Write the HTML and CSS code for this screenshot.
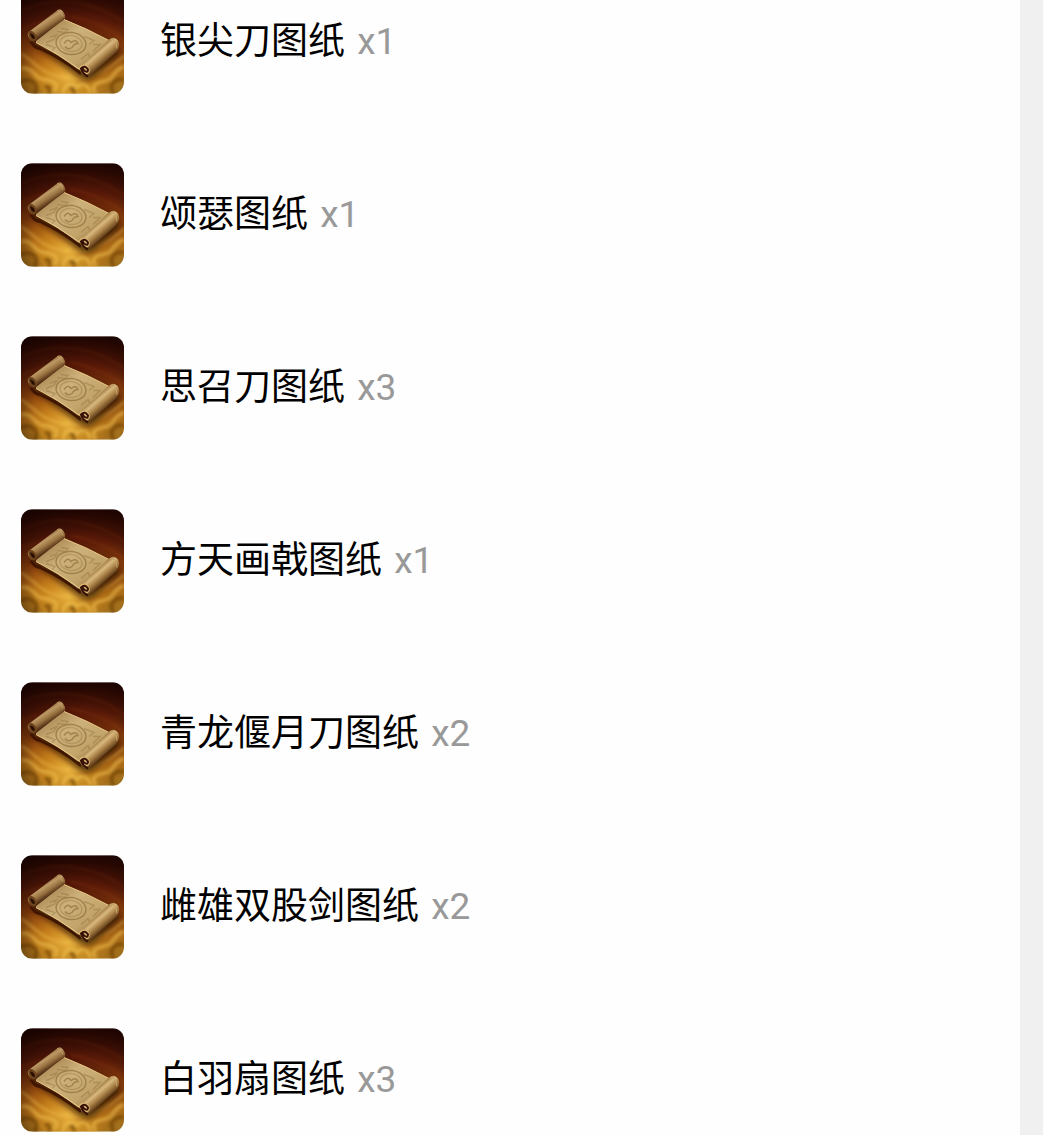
FILE: index.html
```html
<!DOCTYPE html>
<html lang="zh-CN">
<head>
  <meta charset="UTF-8" />
  <meta name="viewport" content="width=device-width, initial-scale=1.0"/>
  <title>图纸</title>
  <link rel="stylesheet" href="styles.css">
</head>
<body>
  <!-- Shared scroll icon -->
  <svg class="sprite" aria-hidden="true">
    <defs>
      <linearGradient id="bgBase" x1="0" y1="0" x2="0" y2="1">
        <stop offset="0" stop-color="#2c0702"/>
        <stop offset="0.3" stop-color="#5a1a08"/>
        <stop offset="0.55" stop-color="#843d0c"/>
        <stop offset="0.8" stop-color="#a96a16"/>
        <stop offset="1" stop-color="#a0741f"/>
      </linearGradient>
      <radialGradient id="bgGlow" cx="0.46" cy="0.83" r="0.5">
        <stop offset="0" stop-color="#ffc94a" stop-opacity="0.75"/>
        <stop offset="0.5" stop-color="#e79a20" stop-opacity="0.45"/>
        <stop offset="1" stop-color="#a44a08" stop-opacity="0"/>
      </radialGradient>
      <radialGradient id="bgShade" cx="0.58" cy="0.7" r="0.9">
        <stop offset="0.5" stop-color="#100200" stop-opacity="0"/>
        <stop offset="1" stop-color="#100200" stop-opacity="0.85"/>
      </radialGradient>
      <linearGradient id="paper" x1="0" y1="0" x2="1" y2="1">
        <stop offset="0" stop-color="#9a743f"/>
        <stop offset="0.4" stop-color="#cdb17b"/>
        <stop offset="0.7" stop-color="#c2a469"/>
        <stop offset="1" stop-color="#7e5527"/>
      </linearGradient>
      <linearGradient id="rollLeft" gradientUnits="userSpaceOnUse" x1="21" y1="27" x2="30" y2="41">
        <stop offset="0" stop-color="#74502a"/>
        <stop offset="0.3" stop-color="#bd9a65"/>
        <stop offset="0.6" stop-color="#987140"/>
        <stop offset="1" stop-color="#3d1c08"/>
      </linearGradient>
      <linearGradient id="rollRight" gradientUnits="userSpaceOnUse" x1="73" y1="60" x2="85" y2="74">
        <stop offset="0" stop-color="#8c6533"/>
        <stop offset="0.3" stop-color="#d9b97e"/>
        <stop offset="0.6" stop-color="#a57c43"/>
        <stop offset="1" stop-color="#402007"/>
      </linearGradient>
      <filter id="soft" x="-20%" y="-20%" width="140%" height="140%">
        <feGaussianBlur stdDeviation="1.4"/>
      </filter>
      <filter id="ink" x="-20%" y="-20%" width="140%" height="140%">
        <feGaussianBlur stdDeviation="0.6"/>
      </filter>
      <filter id="shadow" x="-20%" y="-20%" width="140%" height="140%">
        <feGaussianBlur stdDeviation="3"/>
      </filter>
    </defs>
    <symbol id="scroll" viewBox="0 0 103 103">
      <rect width="103" height="103" fill="url(#bgBase)"/>
      <rect width="103" height="103" fill="url(#bgGlow)"/>
      <g filter="url(#soft)" fill="none" stroke="#f0c04e">
        <path d="M0 63C14 72 20 82 37 86C57 91 79 86 103 65" stroke-width="3" opacity="0.4"/>
        <path d="M0 78C12 76 13 88 23 89C34 90 39 95 33 101M103 76C91 80 94 89 82 91C73 92 70 97 75 103" stroke-width="4" opacity="0.55"/>
        <path d="M42 103C43 93 51 91 56 97C61 91 68 94 69 103" stroke-width="3" opacity="0.65"/>
        <path d="M0 91C11 86 20 96 13 103M103 89C93 87 87 95 93 103M24 97Q30 94 28 103M49 99Q53 96 53 103" stroke="#693a09" stroke-width="4" opacity="0.6"/>
      </g>
      <path d="M1 20C30 5 73 9 103 32M0 39Q16 31 30 30M50 26Q81 32 102 48" fill="none" stroke="#a04714" stroke-width="2" opacity="0.25" filter="url(#soft)"/>
      <rect width="103" height="103" fill="url(#bgShade)"/>
      <path d="M9 51L60 88Q67 93 75 86L101 62L91 53L45 32Z" fill="#250b02" opacity="0.75" filter="url(#shadow)"/>
      <g filter="url(#ink)">
        <path d="M10 51Q13 57 19 58Q41 68 60 83" fill="none" stroke="#3f1905" stroke-width="3"/>
      </g>
      <path d="M15 49L43 29Q66 38 88 50L65 80L57 79Q36 63 15 52Z" fill="url(#paper)"/>
      <path d="M43 29Q66 38 88 50" fill="none" stroke="#ebcb87" stroke-width="1"/>
      <path d="M15 52Q37 63 59 79" fill="none" stroke="#e8cc8f" stroke-width="1"/>
      <g fill="none" stroke="#80602f" stroke-width="1.5" opacity="0.55" filter="url(#ink)">
        <ellipse cx="50" cy="53" rx="15" ry="11" transform="rotate(8 50 53)"/>
        <ellipse cx="50" cy="53" rx="11" ry="8" transform="rotate(8 50 53)" opacity="0.5"/>
        <path d="M43 53Q47 47 50 52Q55 48 57 53Q53 53 51 57Q47 60 44 56"/>
        <path d="M29 47L36 44L33 49L25 52M40 38L47 39L44 42L36 41M63 46L73 50L68 54M60 69L67 63L69 67M25 54L34 57L31 60M72 54L79 54L72 61" opacity="0.6"/>
      </g>
      <path d="M7 42L36 20Q39 17 42 21Q45 25 44 28L17 49Q13 53 10 50Q6 46 7 42Z" fill="url(#rollLeft)"/>
      <path d="M7 42Q10 38 14 43Q18 48 13 51Q8 51 7 42Z" fill="#6d431d"/>
      <path d="M9 43Q13 43 14 48Q11 50 9 43Z" fill="#270e04"/>
      <path d="M36 20Q40 20 42 26" fill="none" stroke="#c09c64" stroke-width="1"/>
      <path d="M61 74L88 49Q93 45 97 50Q100 56 95 62L70 84Q65 88 61 83Q57 79 61 74Z" fill="url(#rollRight)"/>
      <path d="M58 77Q61 72 67 76Q71 81 66 84Q61 83 58 77Z" fill="#dfb975"/>
      <path d="M60 78Q64 74 67 79Q67 83 63 80Q61 76 60 78Q61 83 67 86" fill="none" stroke="#351205" stroke-width="2"/>
      <path d="M89 49Q95 47 96 58" fill="none" stroke="#c9a367" stroke-width="1"/>
    </symbol>
  </svg>

  <main class="page">
    <ul class="item-list">
      <li class="item">
        <svg class="icon" aria-hidden="true"><use href="#scroll"/></svg>
        <div class="name">银尖刀图纸 <span class="count">x1</span></div>
      </li>
      <li class="item">
        <svg class="icon" aria-hidden="true"><use href="#scroll"/></svg>
        <div class="name">颂瑟图纸 <span class="count">x1</span></div>
      </li>
      <li class="item">
        <svg class="icon" aria-hidden="true"><use href="#scroll"/></svg>
        <div class="name">思召刀图纸 <span class="count">x3</span></div>
      </li>
      <li class="item">
        <svg class="icon" aria-hidden="true"><use href="#scroll"/></svg>
        <div class="name">方天画戟图纸 <span class="count">x1</span></div>
      </li>
      <li class="item">
        <svg class="icon" aria-hidden="true"><use href="#scroll"/></svg>
        <div class="name">青龙偃月刀图纸 <span class="count">x2</span></div>
      </li>
      <li class="item">
        <svg class="icon" aria-hidden="true"><use href="#scroll"/></svg>
        <div class="name">雌雄双股剑图纸 <span class="count">x2</span></div>
      </li>
      <li class="item">
        <svg class="icon" aria-hidden="true"><use href="#scroll"/></svg>
        <div class="name">白羽扇图纸 <span class="count">x3</span></div>
      </li>
    </ul>
  </main>
</body>
</html>
```
FILE: styles.css
```css
* {
  box-sizing: border-box;
}

body {
  margin: 0;
  height: 100vh;
  overflow: hidden;
  background: #fefefe;
  color: #000;
  font-family: Roboto, "Noto Sans CJK SC", sans-serif;
}

.sprite {
  position: absolute;
  width: 0;
  height: 0;
}

.page {
  height: 100%;
  margin-right: 2px;
  border-right: 23px solid #f0f0f0;
  overflow: hidden;
}

/* The list is scrolled a little past its first row */
.item-list {
  display: flex;
  flex-direction: column;
  gap: 69px;
  list-style: none;
  margin: -10px 0 0;
  padding: 0 21px;
}

.item {
  display: flex;
  align-items: center;
  gap: 36px;
}

.icon {
  flex: none;
  width: 103px;
  height: 104px;
  border-radius: 12px;
}

.name {
  font-size: 37px;
  line-height: 48px;
}

.count {
  margin-left: 3px;
  color: #999;
}
```
